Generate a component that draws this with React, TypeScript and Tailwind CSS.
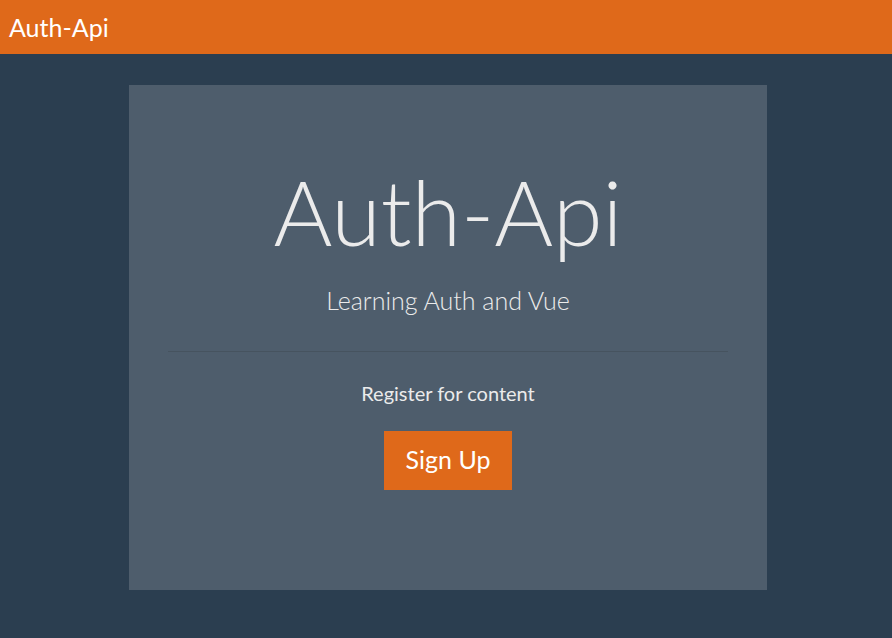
export default function App() {
  return (
    <div className="min-h-[638px] bg-[#2B3E50] text-[#EBEBEB]" style={{ fontFamily: 'Lato, "Open Sans", sans-serif' }}>
      <nav className="h-[54px] bg-[#DF691A] flex items-center px-[9px]">
        <span className="text-[25px] leading-none text-white">Auth-Api</span>
      </nav>
      <div className="pt-[31px] pl-[4px] flex justify-center">
        <div className="w-[638px] h-[505px] bg-[#4E5D6C] flex flex-col items-center px-[39px] pt-[72px]">
          <h1 className="text-[90px] font-light leading-[1.2]">Auth-Api</h1>
          <p className="text-[25px] font-light leading-[1.5] mt-[17px]">Learning Auth and Vue</p>
          <hr className="w-full border-0 border-t border-[#46535f] mt-[31px]" />
          <p className="text-[20px] mt-[26px] leading-[1.5]">Register for content</p>
          <button className="mt-[23px] w-[128px] h-[59px] bg-[#DF691A] text-white text-[25px] leading-none pb-[2px]">Sign Up</button>
        </div>
      </div>
    </div>
  );
}
